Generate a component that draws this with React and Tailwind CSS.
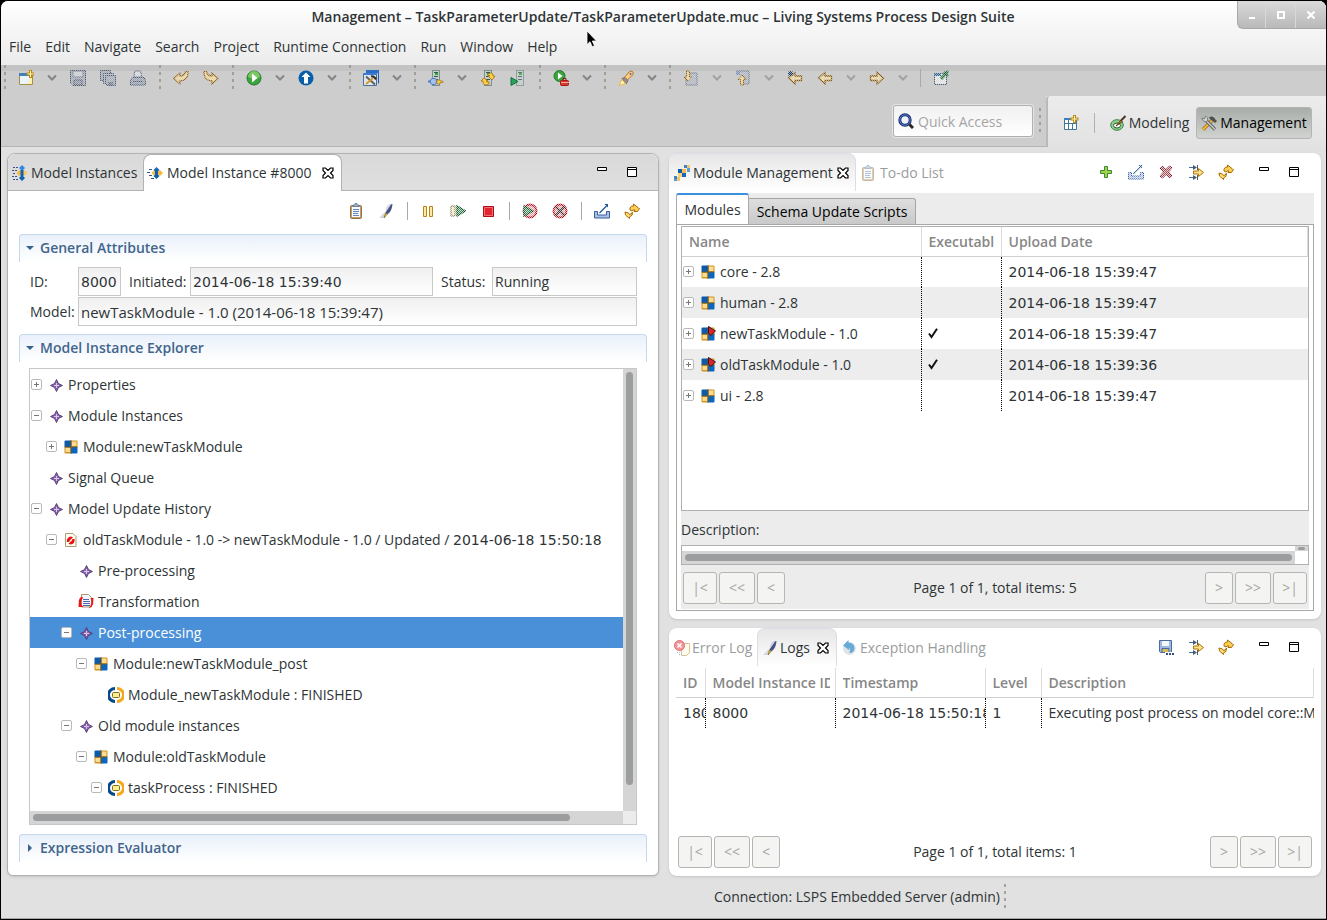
import React from "react";

/* ---------- icons (16x16 grid) ---------- */

const Icon = ({ dim = false, className = "", children }) => (
  <svg width="16" height="16" viewBox="0 0 16 16" aria-hidden="true" className={`shrink-0 ${className}`}>
    {dim ? <g mask="url(#dither)">{children}</g> : children}
  </svg>
);

// Checkerboard mask shared by every disabled icon
const DitherMask = () => (
  <svg width="0" height="0" className="absolute" aria-hidden="true">
    <defs>
      <pattern id="checks" width="2" height="2" patternUnits="userSpaceOnUse">
        <path d="M0 0h1v1H0zM1 1h1v1H1z" fill="#fff" shapeRendering="crispEdges" />
      </pattern>
      <mask id="dither" maskUnits="userSpaceOnUse" x="0" y="0" width="16" height="16">
        <rect width="16" height="16" fill="#444" />
        <rect width="16" height="16" fill="url(#checks)" />
      </mask>
    </defs>
  </svg>
);

const NewIcon = () => (
  <Icon>
    <path d="M1.5 3.5h13v11h-13z" fill="#eaf4fc" stroke="#a88d45" />
    <path d="M1 3h10v3H1z" fill="#3f80b8" />
    <path d="M11.5 6v3q0 5-5 5h7.5V7z" fill="#fff0a8" />
    <path d="M12.5 0v8M8.5 4h8" stroke="#b98b1b" strokeWidth="3" />
    <path d="M12.5 1v6M9.5 4h6" stroke="#fff4b0" strokeWidth="1" />
  </Icon>
);
const SaveIcon = () => (
  <Icon dim>
    <path d="M.5 .5h15v15h-13l-2-2z" fill="#a4adba" stroke="#4d5a70" />
    <path d="M3 1h10v6H3z" fill="#d4d8de" stroke="#6b7486" />
    <path d="M4 10h8v5H4z" fill="#8d96a6" stroke="#4d5a70" />
  </Icon>
);
const SaveAllIcon = () => (
  <Icon dim>
    <path d="M.5 .5h10v10h-10z" fill="#a4adba" stroke="#4d5a70" />
    <path d="M3.5 3.5h10v10h-10z" fill="#b5bcc7" stroke="#4d5a70" />
    <path d="M5.5 5.5h10v10h-8l-2-2z" fill="#a4adba" stroke="#4d5a70" />
    <path d="M8 12h5v3H8z" fill="#6b7486" />
  </Icon>
);
const PrintIcon = () => (
  <Icon dim>
    <path d="M4.5 1h6l1.500 6H4z" fill="#dfe3ea" stroke="#5c6880" />
    <path d="M2 7.5h12l1.500 3v4.500H.5v-4.500z" fill="#98a3b5" stroke="#4d5a70" />
    <path d="M3 11.5h10" stroke="#4d5a70" />
  </Icon>
);
const UndoIcon = () => (
  <Icon dim>
    <path d="M.8 8.5L7 3v3q4.500 0 5.500-4.500h2.500Q15.500 10.500 7 10.800V14z" fill="#fbe0a0" stroke="#94600a" strokeWidth="1.200" />
  </Icon>
);
const RedoIcon = () => (
  <Icon dim>
    <path d="M15.200 8.500L9 3v3Q4.500 6 3.500 1.500H1Q.5 10.500 9 10.800V14z" fill="#fbe0a0" stroke="#94600a" strokeWidth="1.200" />
  </Icon>
);
const RunIcon = () => (
  <Icon>
    <circle cx="8" cy="8" r="7" fill="#3da33c" stroke="#227a2c" />
    <path d="M2 7a6 6 0 0 1 12 0q-6 3-12 0z" fill="#7cc766" />
    <path d="M6 3.500l5.500 4.500L6 12.500z" fill="#fff" />
  </Icon>
);
const UploadIcon = () => (
  <Icon>
    <circle cx="8" cy="8" r="7.500" fill="#065fa8" />
    <path d="M8 2.500l4.500 4.500H10v6.500H6V7H3.500z" fill="#fff" />
  </Icon>
);
const ToolsWindowIcon = () => (
  <Icon>
    <path d="M3.500 .5h12v13" fill="none" stroke="#1f5fae" />
    <path d="M3 0h13v3H3z" fill="#2c6cc4" />
    <path d="M.5 3.500h13v12H.5z" fill="#dfe6ee" stroke="#4a6f9d" />
    <path d="M1 3h13v2H1z" fill="#3b7cd0" />
    <path d="M3 6.500l9 8" stroke="#5b6164" strokeWidth="2" />
    <path d="M3 14l7-6" stroke="#d69a26" strokeWidth="2" />
    <path d="M8 6.500q3-1 5 3" fill="none" stroke="#333" strokeWidth="2" />
  </Icon>
);
const Server = ({ x = 6 }) => (
  <g>
    <rect x={x + 0.5} y=".5" width="7" height="15" fill="#c3d0ce" stroke="#7b918d" />
    <path d={`M${x + 2} 2.500h4M${x + 2} 6.500h4M${x + 2} 9.500h4`} stroke="#3c5554" />
    <path d={`M${x + 3} 3h3v2h-3z`} fill="#24ae25" />
  </g>
);
const ServerPlugIcon = () => (
  <Icon>
    <Server x={4} />
    <path d="M4 8.500h3q1.500 0 1.500 3T7 14.500H4q-2-1-2-3t2-3z" fill="#a3c1ea" stroke="#4e7fc0" />
    <path d="M0 11.500h3" stroke="#4e7fc0" strokeWidth="2" />
    <path d="M9 10h3v1h3v1.500h-3V14H9z" fill="#f6cf58" stroke="#a97613" strokeWidth=".7" />
  </Icon>
);
const ServerSyncIcon = () => (
  <Icon>
    <Server x={4} />
    <path d="M8 4q5-3 5 2h2l-3 4-4-4h2q0-1-2 0z" fill="#fbd14b" stroke="#a56c05" strokeWidth=".8" />
    <path d="M9 14q-6 3-6-3H1l3-3 4 3H6q0 1 3 1z" fill="#fbd14b" stroke="#a56c05" strokeWidth=".8" />
  </Icon>
);
const ServerPlayIcon = () => (
  <Icon>
    <g opacity=".75"><Server x={6} /></g>
    <path d="M1 7.500l7 4-7 4z" fill="#2fa15b" stroke="#0f713a" />
  </Icon>
);
const RunToolsIcon = () => (
  <Icon>
    <circle cx="6.500" cy="6" r="5.500" fill="#3da33c" stroke="#227a2c" />
    <path d="M5 2.500l4.500 3.500L5 9.500z" fill="#fff" />
    <path d="M10 10V8.500h3V10" fill="none" stroke="#8e1515" />
    <rect x="7.500" y="10.500" width="8" height="5" rx="1" fill="#d9382d" stroke="#a21d18" />
    <path d="M8 12.500h8" stroke="#f2a79d" />
  </Icon>
);
const TorchIcon = () => (
  <Icon>
    <path d="M6 8l5-6q2-2 4 0 1 2-1 3.500L8.500 11z" fill="#ffce7d" stroke="#b9722b" />
    <path d="M4 8.500l3-1 3 3-2 3.500z" fill="#9b8d8d" stroke="#7b6c6c" />
    <path d="M1 15.500l3-6 3.500 4z" fill="#fff9c4" stroke="#eab640" />
    <circle cx="12.500" cy="4" r="1" fill="#3d6eb0" />
  </Icon>
);
const NextAnnotationIcon = () => (
  <Icon dim>
    <path d="M5 3h9v12H3V9" fill="#b4bbc6" stroke="#6e7a90" />
    <path d="M3.500 1h3v6h2.500L5 11 1 7h2.500z" fill="#f8dfa0" stroke="#94600a" />
  </Icon>
);
const PrevAnnotationIcon = () => (
  <Icon dim>
    <path d="M2 1h12v13H8" fill="#b4bbc6" stroke="#6e7a90" />
    <path d="M5.500 15h3V9.500H11L7 5 3 9.500h2.500z" fill="#f8dfa0" stroke="#94600a" />
    <path d="M1 1h4v4H1z" fill="#7d93b6" />
  </Icon>
);
const BackIcon = ({ star = false }) => (
  <Icon dim>
    <path d="M1.500 8L8 2.500V6h6.500v4.500H8V14z" fill="#fbe3a8" stroke="#875606" strokeWidth="1.300" />
    {star && <path d="M3.500 1v5M1 3.500h5M1.500 1.500l4 4M5.500 1.500l-4 4" stroke="#143c6a" />}
  </Icon>
);
const ForwardIcon = () => (
  <Icon dim>
    <path d="M14.500 8L8 2.500V6H1.500v4.500H8V14z" fill="#fbe3a8" stroke="#875606" strokeWidth="1.300" />
  </Icon>
);
const PinEditorIcon = () => (
  <Icon dim>
    <path d="M1.500 3.500h12v11h-12z" fill="#f2f4f6" stroke="#50647c" />
    <path d="M1 3h7v3H1z" fill="#376a9a" />
    <path d="M15 1l-7 8" stroke="#1d7b38" strokeWidth="3" />
    <path d="M11 2l4 4" stroke="#135e28" strokeWidth="2" />
  </Icon>
);
const SearchIcon = () => (
  <Icon>
    <circle cx="7" cy="7" r="5.200" fill="#eef2fa" stroke="#1b3175" strokeWidth="3" />
    <circle cx="7" cy="7" r="5.200" fill="none" stroke="#5b78c8" strokeWidth="1" />
    <path d="M11.500 11.500l3.500 3.500" stroke="#2d2722" strokeWidth="3" />
  </Icon>
);
const PerspectiveIcon = () => (
  <Icon>
    <path d="M1.500 3.500h12v11h-12z" fill="#fdfefe" stroke="#3f7898" />
    <path d="M1 3h10v2H1z" fill="#3a80bd" />
    <path d="M5.500 5v9M2 8.500h11M9.500 9v5" stroke="#3f7898" />
    <path d="M11.500 0v8M7.500 4h8" stroke="#b98b1b" strokeWidth="3" />
    <path d="M11.500 1v6M8.500 4h6" stroke="#fff4b0" />
  </Icon>
);
const ModelingIcon = () => (
  <Icon>
    <ellipse cx="7" cy="10" rx="6.300" ry="5.300" fill="#8fd08a" stroke="#3f7f48" />
    <ellipse cx="7" cy="10.500" rx="3.500" ry="2.500" fill="#fff" stroke="#1f5928" />
    <path d="M6 11l5-6 1.500 1.500z" fill="#c4873a" stroke="#5c3b12" />
    <path d="M11 5.500L15.500 1" stroke="#47382a" strokeWidth="2" />
  </Icon>
);
const ManagementIcon = () => (
  <Icon>
    <path d="M2 14.500l9-9" stroke="#a8690d" strokeWidth="3.400" />
    <path d="M2 14.500l9-9" stroke="#f2bb3d" strokeWidth="1.800" />
    <path d="M3.500 4l10.500 10.500" stroke="#5c6362" strokeWidth="3.200" />
    <path d="M3.500 4l10.500 10.500" stroke="#c9cecd" strokeWidth="1.400" />
    <path d="M.8 3l2.700 1 1-3q3 1 2 5-4 2-5.700-3z" fill="#d4d8d7" stroke="#6b7170" strokeWidth=".8" />
    <path d="M8 2.500q4-2.500 6.500 2L16 6l-2 2-5-4z" fill="#4b5150" />
  </Icon>
);
const Diamond = ({ x, y, r, fill }) => (
  <path d={`M${x} ${y - r}l${r} ${r}-${r} ${r}-${r}-${r}z`} fill={fill} />
);
const ModelInstancesIcon = () => (
  <Icon>
    <path d="M1 2.500h5M0 5.500h5M1 8.500h3M0 11.500h5M1 14.500h5" stroke="#33548a" strokeDasharray="2 1" />
    <Diamond x={10} y={3} r={3} fill="#2e8ae0" />
    <Diamond x={10} y={13} r={3} fill="#0d5fb0" />
    <Diamond x={7.5} y={8} r={3} fill="#f7b93e" />
    <Diamond x={12.5} y={8} r={3} fill="#f9c95e" />
    <path d="M8.500 5h3v6h-3z" fill="#0d62b8" />
  </Icon>
);
const ModelInstanceIcon = () => (
  <Icon>
    <path d="M2 4.500h4M0 7.500h4M2 10.500h4M4 13.500h3" stroke="#33548a" strokeDasharray="3 1" />
    <Diamond x={9.5} y={5} r={3} fill="#1668b8" />
    <Diamond x={9.5} y={11} r={3} fill="#0d5fb0" />
    <Diamond x={7} y={8} r={2.5} fill="#f7b93e" />
    <Diamond x={13} y={8} r={3} fill="#f7b93e" />
    <path d="M8 5h3v6H8z" fill="#0d62b8" />
  </Icon>
);
const CloseIcon = () => (
  <svg width="12" height="12" viewBox="0 0 12 12" aria-hidden="true">
    <path d="M1 1h2.500L6 3.500 8.500 1H11v2.500L8.500 6 11 8.500V11H8.500L6 8.500 3.500 11H1V8.500L3.500 6 1 3.500z" fill="#fff" stroke="#000" strokeWidth="1.200" />
  </svg>
);
const ClipboardIcon = ({ faded = false }) => (
  <Icon className={faded ? "opacity-50" : ""}>
    <rect x="2.500" y="2.500" width="11" height="13" rx="1" fill="#c99c61" stroke="#8d7350" />
    <path d="M4 4h8v10H4z" fill="#f6f9fe" />
    <path d="M5 6.500h6M5 8.500h6M5 10.500h5M5 12.500h6" stroke="#6585b8" />
    <path d="M5 3.500V2h2V.5h2V2h2v1.500z" fill="#a4bad8" stroke="#5c7394" strokeWidth=".8" />
  </Icon>
);
const PenIcon = () => (
  <Icon>
    <path d="M1 15q5-6 9-7l-3 7z" fill="#d6d7dc" />
    <path d="M14.500 1Q10 1 8.500 6.500l-1 4 2.500.5Q14 8 14.500 1z" fill="#47507e" />
    <path d="M13.500 1Q9 1 8 6.500L7.500 9.500z" fill="#cfd3e8" />
    <path d="M7.500 10l2 1L6 15z" fill="#e4c13b" stroke="#5c4c17" strokeWidth=".5" />
  </Icon>
);
const PauseIcon = () => (
  <Icon>
    <path d="M3.500 3.500h3v10h-3zM9.500 3.500h3v10h-3z" fill="#fdeaa0" stroke="#b8841c" />
  </Icon>
);
const ResumeIcon = () => (
  <Icon dim>
    <path d="M1 3h4v10H1z" fill="#f1e8b9" stroke="#6c6433" />
    <path d="M7 3l8.500 5L7 13z" fill="#3f8c5a" stroke="#0d5126" strokeWidth="1.500" />
  </Icon>
);
const StopIcon = () => (
  <Icon>
    <path d="M3.500 3.500h10v10h-10z" fill="#e32431" stroke="#a80d18" />
    <path d="M4.500 4.500h8v8h-8z" fill="none" stroke="#f07078" />
  </Icon>
);
const BreakpointRunIcon = () => (
  <Icon dim>
    <circle cx="8" cy="8" r="6.500" fill="#f0a0a4" stroke="#b40e1c" strokeWidth="2" />
    <path d="M2 3l9 5-9 5z" fill="#3f8c5a" stroke="#0d5126" strokeWidth="1.500" />
  </Icon>
);
const BreakpointOffIcon = () => (
  <Icon dim>
    <circle cx="8" cy="8" r="6.500" fill="#f0a0a4" stroke="#b40e1c" strokeWidth="2" />
    <path d="M3.500 3.500l9 9M12.500 3.500l-9 9" stroke="#2c2c2c" strokeWidth="2.200" />
  </Icon>
);
const ExportIcon = ({ dim = false }) => (
  <Icon dim={dim}>
    <path d="M.5 8.500h3v3.500h9V8.500h3v6.500H.5z" fill="#a9c1ea" stroke="#3d5f9c" />
    <path d="M5.500 10l7-7" stroke="#1c568f" strokeWidth="1.200" />
    <path d="M10.500 1H14v3.500z" fill="#1c568f" />
  </Icon>
);
const RefreshIcon = () => (
  <Icon>
    <path d="M6 7q-.5-4 3.500-4V1l4.500 3.500q.5 1 1.500 1l-2 3L10 8.500 11 7H9L8 8z" fill="#fbcf55" stroke="#a86a05" />
    <path d="M1 9l3.500 1 1 1.500q2 0 3-2.500.5 4-3 5v1.500L1.500 12z" fill="#fbdf6f" stroke="#a86a05" />
  </Icon>
);
const PlusIcon = () => (
  <Icon>
    <path d="M6.500 2.500h3v4h4v3h-4v4h-3v-4h-4v-3h4z" fill="#a6d343" stroke="#38883e" />
  </Icon>
);
const DeleteIcon = () => (
  <Icon dim>
    <path d="M2 4l2.500-2L8 5.500 11.500 2 14 4l-3.500 4 3.500 4-2.500 2L8 10.500 4.500 14 2 12l3.500-4z" fill="#a85058" stroke="#6d0d1c" />
  </Icon>
);
const FilterIcon = () => (
  <Icon>
    <path d="M1 3.500h6M1 13.500h6" stroke="#3c6e9c" />
    <path d="M5 1l4 2.500L5 6zM5 11l4 2.500L5 16z" fill="#4a5c70" />
    <path d="M9.500 1v5M9.500 11v5" stroke="#4a5c70" />
    <path d="M5.500 7h5V4.500l5 4-5 4V10h-5z" fill="#fbe08a" stroke="#b0740c" />
  </Icon>
);
const SaveAsIcon = () => (
  <Icon>
    <path d="M1.500 1.500h12v12h-11l-1-1z" fill="#9db9de" stroke="#4a6b9d" />
    <path d="M4 2h7v5H4z" fill="#f4f8fc" />
    <path d="M4 9.500h7v4H4z" fill="#d9b95d" stroke="#4a6b9d" />
    <path d="M7 13h9v3H7z" fill="#fff" />
    <path d="M8 14h2v2H8zM11 14h2v2h-2zM14 14h2v2h-2z" fill="#2e4f86" />
  </Icon>
);
const ModuleManagementIcon = () => (
  <Icon>
    <path d="M4 4h4v4H4z" fill="#0d5fb0" />
    <path d="M8 4h4v4H8z" fill="#f7bc4a" />
    <path d="M4 8h4v4H4z" fill="#f9cf78" />
    <path d="M8 8h4v4H8z" fill="#1469bd" />
    <path d="M10 0h3v3h-3zM0 11h3v3H0z" fill="#3984cc" />
    <path d="M13 0h3v3h-3zM3 12h3v4H3z" fill="#f5c566" />
    <path d="M13 3h3v4h-3zM0 14h3v2H0z" fill="#5d9bd4" />
  </Icon>
);
const ModuleIcon = ({ executable = false }) => (
  <Icon>
    <path d="M1.500 2.500q0-1 1-1H8v6.500H1.500z" fill="#0d5ba8" />
    <path d="M8 1.500h5.500q1 0 1 1V8H8z" fill="#d29224" />
    <path d="M9 2.500h4.500V7H9z" fill="#fcdc92" />
    <path d="M1.500 8H8v6.500H2.500q-1 0-1-1z" fill="#d29224" />
    <path d="M2.500 9H7v4H2.500z" fill="#fcdc92" />
    <path d="M8 8h6.500v5.500q0 1-1 1H8z" fill="#0d66bd" />
    <path d="M8 1v14M1.500 8h13" stroke="#6a5a34" strokeWidth=".8" />
    {executable && <path d="M8.500 .5v6.500l2 2.500 5-4.500z" fill="#d8262c" stroke="#43110f" />}
  </Icon>
);
const StarIcon = () => (
  <Icon>
    <path d="M8.500 2.500l2 4 4 2-4 2-2 4-2-4-4-2 4-2z" fill="#8763a8" stroke="#4b2f70" strokeWidth=".8" />
    <path d="M8.500 6v5M6 8.500h5" stroke="#dcc8ea" />
  </Icon>
);
const UpdateIcon = () => (
  <Icon>
    <path d="M2.500 1.500h7.500l3 3v10h-10.500z" fill="#fffdf2" stroke="#a99c7a" />
    <path d="M3.800 10q-.3-5 4.200-5.500l2 .8-2.300 2.200Q6.500 8 6.200 10z" fill="#ef1111" />
    <path d="M11.700 7q.3 5-4.200 5.500l-2-.8 2.300-2.200Q9 9 9.300 7z" fill="#ef1111" />
  </Icon>
);
const TransformationIcon = () => (
  <Icon>
    <path d="M3.500 .5h7l3 3v9.500h-10z" fill="#f6f6fa" stroke="#a89a6d" />
    <path d="M5 5.500h6M5 7.500h7M5 9.500h7M5 11.500h7" stroke="#4b6bb0" />
    <path d="M4 2.500Q.5 4 .8 8.500L.5 13h5L3.500 11Q2 7 5 4z" fill="#f01212" />
    <path d="M12 13.500Q15.500 12 15.200 7.500l.3-3.500H12.500q2 4 0 7.500l-2 3z" fill="#f01212" />
  </Icon>
);
const ProcessIcon = () => (
  <Icon>
    <path d="M7 0A8 8 0 0 0 7 16V13A5 5 0 0 1 7 3z" fill="#064a8b" />
    <path d="M9 0A8 8 0 0 1 9 16V13A5 5 0 0 0 9 3z" fill="#f5a81c" />
    <rect x="4.500" y="5.500" width="7" height="5" rx="1" fill="#fdf08c" stroke="#7f6c1c" />
  </Icon>
);
const ErrorLogIcon = () => (
  <Icon className="opacity-70">
    <path d="M7.500 3.500h8v9l-3 3h-5z" fill="#fffbe9" stroke="#c5ac65" />
    <circle cx="5.500" cy="5.500" r="5" fill="#ee6a70" stroke="#cf3037" />
    <path d="M3.500 3.500l4 4M7.500 3.500l-4 4" stroke="#fff" strokeWidth="1.500" />
    <path d="M3 12.500h4M5 14.500h3" stroke="#7ea2d8" strokeDasharray="1 1" />
  </Icon>
);
const ExceptionIcon = () => (
  <Icon className="opacity-70">
    <circle cx="8.500" cy="8.500" r="6.500" fill="#d3dadf" />
    <path d="M2 5.500L7.500 0v2.500q6 .5 6 5.500T8 13q2-2.500 0-5.500v2.500z" fill="#2787c6" />
  </Icon>
);
const MinimizeIcon = () => (
  <Icon><path d="M3.500 3.500h9v3h-9z" fill="#fff" stroke="#000" /></Icon>
);
const MaximizeIcon = () => (
  <Icon><path d="M3.500 3.500h9v9h-9zM3.500 5.500h9" fill="#fff" stroke="#000" /></Icon>
);
const CheckIcon = () => (
  <svg width="10" height="12" viewBox="0 0 10 12" role="img" aria-label="Executable">
    <path d="M1 5.500L3.500 9 9 .8" fill="none" stroke="#111" strokeWidth="2" />
  </svg>
);

/* ---------- small building blocks ---------- */

const ToolButton = ({ label, children }) => (
  <button type="button" aria-label={label} className="flex h-[26px] w-[30px] shrink-0 items-center justify-center">{children}</button>
);

const DropButton = ({ label, faded = false }) => (
  <button type="button" aria-label={label} className={`flex h-[26px] w-[22px] shrink-0 items-center justify-center ${faded ? "opacity-60" : ""}`}>
    <svg width="10" height="8" viewBox="0 0 10 8" aria-hidden="true">
      <path d="M1 1.500l4 4 4-4" fill="none" stroke="#858585" strokeWidth="2" />
    </svg>
  </button>
);

const Handle = ({ className = "w-[13px] justify-center" }) => (
  <span className={`flex h-[26px] shrink-0 ${className}`}>
    <svg width="2" height="26" viewBox="0 0 2 26" aria-hidden="true">
      <path d="M1 0v26" stroke="#968f7f" strokeWidth="1.500" strokeDasharray="3 4" />
    </svg>
  </span>
);

const Separator = () => (
  <span className="flex w-3 shrink-0 justify-center"><span className="h-[18px] w-px bg-[#a9a9a9]" /></span>
);

const PanelButtons = () => (
  <>
    <ToolButton label="Minimize"><MinimizeIcon /></ToolButton>
    <ToolButton label="Maximize"><MaximizeIcon /></ToolButton>
  </>
);

const SectionHeader = ({ title, open }) => (
  <button type="button" aria-expanded={open} className="flex h-7 w-full shrink-0 items-center gap-1 rounded-t border border-b-0 border-[#c5d9ee] bg-linear-to-b from-[#eaf1fb] to-white pb-[2px] pl-[6px] text-left font-semibold text-[#41658c]">
    <svg width="10" height="8" viewBox="0 0 10 8" aria-hidden="true">
      <path d={open ? "M0 2h8L4 6z" : "M2 0l4 4-4 4z"} fill="#38618c" />
    </svg>
    {title}
  </button>
);

const Expander = ({ open }) => (
  <svg width="11" height="11" viewBox="0 0 11 11" aria-hidden="true" className="shrink-0">
    <rect x=".5" y=".5" width="10" height="10" rx="1.500" fill="#fff" stroke="#b9b9b9" />
    <path d={open ? "M3 5.500h5" : "M3 5.500h5M5.500 3v5"} stroke="#777" />
  </svg>
);

const Stamp = ({ children }) => <span className="font-['DejaVu_Sans',sans-serif]">{children}</span>;

const PageButton = ({ className, label, children }) => (
  <button type="button" disabled aria-label={label} className={`h-8 rounded-[3px] border border-[#b4b6b2] bg-[#f4f4f2] text-[#a5a7a5] ${className}`}>{children}</button>
);

const Pager = ({ total }) => (
  <div className="flex items-center justify-between">
    <div className="flex gap-[2px]">
      <PageButton className="w-[34px]" label="First page">|&lt;</PageButton>
      <PageButton className="w-9" label="Previous pages">&lt;&lt;</PageButton>
      <PageButton className="w-7" label="Previous page">&lt;</PageButton>
    </div>
    <p>Page 1 of 1, total items: {total}</p>
    <div className="flex gap-[2px]">
      <PageButton className="w-7" label="Next page">&gt;</PageButton>
      <PageButton className="w-9" label="Next pages">&gt;&gt;</PageButton>
      <PageButton className="w-[34px]" label="Last page">&gt;|</PageButton>
    </div>
  </div>
);

const Field = ({ id, label, value, labelClass, className }) => (
  <>
    <label htmlFor={id} className={`shrink-0 ${labelClass}`}>{label}</label>
    <input id={id} readOnly defaultValue={value} className={`h-[29px] min-w-0 border border-[#c8c8c8] bg-linear-to-b from-[#f0f0f0] to-white px-[2px] outline-none ${className}`} />
  </>
);

/* ---------- data ---------- */

const menus = ["File", "Edit", "Navigate", "Search", "Project", "Runtime Connection", "Run", "Window", "Help"];

const indents = ["pl-px", "pl-4", "pl-[31px]", "pl-[46px]", "pl-[61px]"];

const tree = [
  { level: 0, open: false, icon: <StarIcon />, text: "Properties" },
  { level: 0, open: true, icon: <StarIcon />, text: "Module Instances" },
  { level: 1, open: false, icon: <ModuleIcon />, text: "Module:newTaskModule" },
  { level: 0, icon: <StarIcon />, text: "Signal Queue" },
  { level: 0, open: true, icon: <StarIcon />, text: "Model Update History" },
  { level: 1, open: true, icon: <UpdateIcon />, text: "oldTaskModule - 1.0 -> newTaskModule - 1.0 / Updated / ", stamp: "2014-06-18 15:50:18" },
  { level: 2, icon: <StarIcon />, text: "Pre-processing" },
  { level: 2, icon: <TransformationIcon />, text: "Transformation" },
  { level: 2, open: true, icon: <StarIcon />, text: "Post-processing", selected: true },
  { level: 3, open: true, icon: <ModuleIcon />, text: "Module:newTaskModule_post" },
  { level: 4, icon: <ProcessIcon />, text: "Module_newTaskModule : FINISHED" },
  { level: 2, open: true, icon: <StarIcon />, text: "Old module instances" },
  { level: 3, open: true, icon: <ModuleIcon />, text: "Module:oldTaskModule" },
  { level: 4, open: true, icon: <ProcessIcon />, text: "taskProcess : FINISHED" },
];

const modules = [
  { name: "core - 2.8", date: "2014-06-18 15:39:47" },
  { name: "human - 2.8", date: "2014-06-18 15:39:47" },
  { name: "newTaskModule - 1.0", date: "2014-06-18 15:39:47", executable: true },
  { name: "oldTaskModule - 1.0", date: "2014-06-18 15:39:36", executable: true },
  { name: "ui - 2.8", date: "2014-06-18 15:39:47" },
];

/* ---------- window chrome ---------- */

const TitleBar = () => (
  <header className="flex h-16 shrink-0 flex-col bg-linear-to-b from-white to-[#ebebeb]">
    <div className="flex h-7 items-start">
      <span className="w-[88px]" />
      <h1 className="flex-1 pt-[6px] text-center leading-5 font-semibold">Management – TaskParameterUpdate/TaskParameterUpdate.muc – Living Systems Process Design Suite</h1>
      <div className="flex h-7 divide-x divide-[#d8d8d8] overflow-hidden rounded-bl-md border-b border-l border-[#a9a9a9] bg-linear-to-b from-[#dadada] to-[#b9b9b9]">
        <button type="button" aria-label="Minimize window" className="flex w-7 items-center justify-center">
          <svg width="10" height="10" viewBox="0 0 10 10"><path d="M2 7h6v2H2z" fill="#fff" /></svg>
        </button>
        <button type="button" aria-label="Maximize window" className="flex w-[30px] items-center justify-center">
          <svg width="10" height="10" viewBox="0 0 10 10"><path d="M2 2h6v6H2z" fill="none" stroke="#fff" strokeWidth="2" /></svg>
        </button>
        <button type="button" aria-label="Close window" className="flex w-[30px] items-center justify-center">
          <svg width="10" height="10" viewBox="0 0 10 10"><path d="M1.500 1.500l7 7M8.500 1.500l-7 7" stroke="#fff" strokeWidth="2.200" /></svg>
        </button>
      </div>
    </div>
    <nav className="flex gap-[14px] pt-2 pl-2 leading-5">
      {menus.map((menu) => (
        <button key={menu} type="button">{menu}</button>
      ))}
    </nav>
  </header>
);

const MainToolbar = () => (
  <div className="flex h-[31px] shrink-0 items-start overflow-hidden bg-linear-to-b from-[#c3c3c3] from-20% to-[#cdcdcd] to-20%">
    <div className="flex items-center">
      <Handle className="w-[10px] justify-start pl-[3px]" />
      <ToolButton label="New"><NewIcon /></ToolButton>
      <DropButton label="New options" />
      <ToolButton label="Save"><SaveIcon /></ToolButton>
      <ToolButton label="Save all"><SaveAllIcon /></ToolButton>
      <ToolButton label="Print"><PrintIcon /></ToolButton>
      <Handle />
      <ToolButton label="Undo"><UndoIcon /></ToolButton>
      <ToolButton label="Redo"><RedoIcon /></ToolButton>
      <Handle />
      <ToolButton label="Run"><RunIcon /></ToolButton>
      <DropButton label="Run options" />
      <ToolButton label="Upload"><UploadIcon /></ToolButton>
      <DropButton label="Upload options" />
      <Handle />
      <ToolButton label="Management tools"><ToolsWindowIcon /></ToolButton>
      <DropButton label="Tool options" />
      <Handle />
      <ToolButton label="Connect server"><ServerPlugIcon /></ToolButton>
      <DropButton label="Server options" />
      <ToolButton label="Synchronize server"><ServerSyncIcon /></ToolButton>
      <ToolButton label="Start server"><ServerPlayIcon /></ToolButton>
      <Handle />
      <ToolButton label="External tools"><RunToolsIcon /></ToolButton>
      <DropButton label="External tool options" />
      <Handle />
      <ToolButton label="Search"><TorchIcon /></ToolButton>
      <DropButton label="Search options" />
      <Handle />
      <ToolButton label="Next annotation"><NextAnnotationIcon /></ToolButton>
      <DropButton label="Next annotation options" faded />
      <ToolButton label="Previous annotation"><PrevAnnotationIcon /></ToolButton>
      <DropButton label="Previous annotation options" faded />
      <ToolButton label="Last edit location"><BackIcon star /></ToolButton>
      <ToolButton label="Back"><BackIcon /></ToolButton>
      <DropButton label="Back options" faded />
      <ToolButton label="Forward"><ForwardIcon /></ToolButton>
      <DropButton label="Forward options" faded />
      <Separator />
      <ToolButton label="Pin editor"><PinEditorIcon /></ToolButton>
    </div>
  </div>
);

const PerspectiveBar = () => (
  <div className="flex h-[51px] shrink-0">
    <div className="flex flex-1 items-center justify-end border-b border-[#b4b4b4] bg-[#cdcdcd]">
      <label className="flex h-8 w-[140px] items-center gap-1 rounded-[3px] border border-[#b0b0b0] bg-linear-to-b from-[#f1f1f1] to-white pl-1 shadow-[0_0_0_1px_#e4e4e4]">
        <SearchIcon />
        <input aria-label="Quick Access" placeholder="Quick Access" className="w-full min-w-0 bg-transparent pt-px outline-none placeholder:text-[#a5a5a5]" />
      </label>
      <Handle />
    </div>
    <div className="flex items-center rounded-tl-sm border-l-2 border-[#b9b9b9] bg-linear-to-b from-[#ececec] to-[#e2e2e2] pt-[2px] pr-[14px] pl-2">
      <ToolButton label="Open perspective"><PerspectiveIcon /></ToolButton>
      <span className="mx-2 h-5 w-px bg-[#b0b0b0]" />
      <button type="button" className="flex h-8 w-[93px] items-center justify-center gap-[3px]"><ModelingIcon />Modeling</button>
      <button type="button" className="flex h-8 w-[116px] items-center justify-center gap-[3px] rounded-[3px] border border-[#b3b6b3] bg-linear-to-b from-[#a9adaa] to-[#d0d3d0] text-black"><ManagementIcon />Management</button>
    </div>
  </div>
);

/* ---------- panels ---------- */

const ModelInstancePanel = () => (
  <section className="flex min-w-0 flex-col rounded-t-lg rounded-b-md border border-[#b2b2b2] bg-white shadow-sm">
    <div className="flex h-[37px] shrink-0 rounded-t-lg bg-linear-to-b from-[#d9d9d9] to-[#e0e0e0]">
      <button type="button" className="flex w-[135px] items-center gap-[3px] border-b border-[#b2b2b2] pt-[2px] pl-1 whitespace-nowrap"><ModelInstancesIcon />Model Instances</button>
      <div className="flex w-[199px] items-center gap-1 rounded-t-lg border-x border-t border-[#b2b2b2] bg-white pl-[3px]">
        <ModelInstanceIcon />
        <button type="button" className="whitespace-nowrap">Model Instance #8000</button>
        <button type="button" aria-label="Close Model Instance #8000" className="ml-auto pr-[7px]"><CloseIcon /></button>
      </div>
      <div className="flex flex-1 items-center justify-end border-b border-[#b2b2b2] pr-[11px]"><PanelButtons /></div>
    </div>

    <div className="mb-[3px] flex h-10 shrink-0 items-center justify-end pr-[11px]">
      <ToolButton label="To-do list"><ClipboardIcon /></ToolButton>
      <ToolButton label="Logs"><PenIcon /></ToolButton>
      <Separator />
      <ToolButton label="Suspend"><PauseIcon /></ToolButton>
      <ToolButton label="Resume"><ResumeIcon /></ToolButton>
      <ToolButton label="Terminate"><StopIcon /></ToolButton>
      <Separator />
      <ToolButton label="Activate breakpoint"><BreakpointRunIcon /></ToolButton>
      <ToolButton label="Remove breakpoint"><BreakpointOffIcon /></ToolButton>
      <Separator />
      <ToolButton label="Export"><ExportIcon /></ToolButton>
      <ToolButton label="Refresh"><RefreshIcon /></ToolButton>
    </div>

    <div className="flex flex-1 flex-col px-[11px] pb-[13px]">
      <SectionHeader title="General Attributes" open />
      <div className="mt-[5px] mb-2 flex flex-col gap-px pr-[10px] pl-[11px]">
        <div className="flex items-center">
          <Field id="instance-id" label="ID:" value="8000" labelClass="w-12" className="w-[43px] font-['DejaVu_Sans',sans-serif]" />
          <Field id="initiated" label="Initiated:" value="2014-06-18 15:39:40" labelClass="ml-2 w-[61px]" className="flex-1 font-['DejaVu_Sans',sans-serif]" />
          <Field id="status" label="Status:" value="Running" labelClass="ml-2 w-[51px]" className="w-[145px]" />
        </div>
        <div className="flex items-center">
          <Field id="model" label="Model:" value="newTaskModule - 1.0 (2014-06-18 15:39:47)" labelClass="w-12" className="flex-1 text-[15px]" />
        </div>
      </div>

      <SectionHeader title="Model Instance Explorer" open />
      <div className="mx-[10px] mt-[6px] mb-[9px] grid flex-1 grid-cols-[1fr_13px] grid-rows-[1fr_13px] border border-[#c8c8c8]">
        <ul role="tree" aria-label="Model Instance Explorer" className="min-w-0 overflow-hidden pb-[7px]">
          {tree.map((node) => (
            <li
              key={node.text}
              role="treeitem"
              aria-expanded={node.open}
              aria-selected={Boolean(node.selected)}
              className={`flex h-[31px] items-center whitespace-nowrap ${indents[node.level]} ${node.selected ? "bg-[#4a90d9] text-white" : ""}`}
            >
              <span className="w-[17px] shrink-0">{node.open !== undefined && <Expander open={node.open} />}</span>
              {node.icon}
              <span className="pl-1">{node.text}{node.stamp && <Stamp>{node.stamp}</Stamp>}</span>
            </li>
          ))}
        </ul>
        <div className="flex flex-col items-center bg-[#d5d5d5] pt-[3px]"><span className="h-[94%] w-[7px] rounded-full bg-[#9c9d9e]" /></div>
        <div className="flex items-center bg-[#d5d5d5] pl-[3px]"><span className="h-[7px] w-[91%] rounded-full bg-[#9c9d9e]" /></div>
        <div className="bg-[#ececec]" />
      </div>

      <SectionHeader title="Expression Evaluator" open={false} />
    </div>
  </section>
);

const ModuleManagementPanel = () => (
  <section className="flex min-w-0 flex-1 flex-col rounded-lg bg-white px-[7px] pb-2 shadow-sm">
    <div className="-mx-[7px] flex h-10 shrink-0">
      <div className="flex h-[38px] w-[187px] items-center gap-[3px] rounded-t-lg border-t border-r border-[#dcdcea] bg-linear-to-b from-[#e6e6e6] to-white pl-[5px]">
        <ModuleManagementIcon />
        <button type="button" className="whitespace-nowrap">Module Management</button>
        <button type="button" aria-label="Close Module Management" className="ml-auto pr-[6px]"><CloseIcon /></button>
      </div>
      <button type="button" className="flex h-[38px] items-center gap-1 pt-[2px] pl-1 text-[#9a9d9d]"><ClipboardIcon faded />To-do List</button>
      <div className="flex h-[38px] flex-1 items-center justify-end pr-3">
        <ToolButton label="Upload module"><PlusIcon /></ToolButton>
        <ToolButton label="Export module"><ExportIcon dim /></ToolButton>
        <ToolButton label="Delete module"><DeleteIcon /></ToolButton>
        <ToolButton label="Filter"><FilterIcon /></ToolButton>
        <ToolButton label="Refresh modules"><RefreshIcon /></ToolButton>
        <span className="w-2" />
        <PanelButtons />
      </div>
    </div>

    <div role="tablist" className="flex h-[31px] shrink-0 items-end bg-[#ececec]">
      <button type="button" role="tab" aria-selected="true" className="h-[31px] w-[73px] rounded-t-[3px] border-x border-t-2 border-x-[#a9a9a9] border-t-[#3d8fe0] bg-white">Modules</button>
      <button type="button" role="tab" aria-selected="false" className="h-[26px] w-[167px] rounded-tr-[3px] border-t border-r border-[#a5a5a5] bg-linear-to-b from-[#dedede] to-[#c9c9c9] text-black">Schema Update Scripts</button>
    </div>

    <div className="flex flex-1 flex-col border border-[#a5a8a5] px-1 pt-px pb-px">
      <div className="flex-1 border border-[#b0b0b0]">
        <table className="w-full table-fixed border-collapse text-left">
          <colgroup><col className="w-[239px]" /><col className="w-20" /><col /></colgroup>
          <thead className="text-[#878787]">
            <tr className="h-[29px] border-b border-[#cfcfcf]">
              <th className="border-r border-[#dcdcdc] px-[7px] pt-[2px] font-semibold">Name</th>
              <th className="border-r border-[#dcdcdc] px-[7px] pt-[2px] font-semibold"><div className="overflow-hidden">Executable</div></th>
              <th className="border-r border-[#dcdcdc] px-[7px] pt-[2px] font-semibold">Upload Date</th>
            </tr>
          </thead>
          <tbody>
            {modules.map((item) => (
              <tr key={item.name} className="h-[31px] even:bg-[#ededed]">
                <td className="border-r border-dotted border-black pl-px">
                  <div className="flex items-center">
                    <Expander open={false} />
                    <span className="w-[6px]" />
                    <ModuleIcon executable={item.executable} />
                    <span className="pl-1">{item.name}</span>
                  </div>
                </td>
                <td className="border-r border-dotted border-black pl-[6px]">{item.executable && <CheckIcon />}</td>
                <td className="px-[7px]"><Stamp>{item.date}</Stamp></td>
              </tr>
            ))}
          </tbody>
        </table>
      </div>
      <div className="bg-[#ececec] pb-[5px]">
        <label htmlFor="module-description" className="block pt-[9px] pb-[5px] leading-5">Description:</label>
        <div className="grid grid-cols-[1fr_13px] border border-[#b0b0b0] bg-white">
          <div>
            <textarea id="module-description" readOnly className="block h-[5px] w-full resize-none outline-none" />
            <div className="flex h-[13px] items-center bg-[#d5d5d5] px-[3px]"><span className="h-[7px] w-full rounded-full bg-[#9c9d9e]" /></div>
          </div>
          <div className="flex h-[5px] items-center justify-center bg-[#d5d5d5]"><span className="h-[3px] w-[7px] rounded-full bg-[#9c9d9e]" /></div>
        </div>
        <div className="px-[2px] pt-[7px]"><Pager total={5} /></div>
      </div>
    </div>
  </section>
);

const LogsPanel = () => (
  <section className="flex min-h-[248px] min-w-0 flex-col rounded-lg bg-white px-[7px] pb-2 shadow-sm">
    <div className="-mx-[7px] flex h-10 shrink-0">
      <button type="button" className="flex h-[38px] w-[88px] items-center gap-[2px] pt-[2px] pl-[5px] whitespace-nowrap text-[#9a9d9d]"><ErrorLogIcon />Error Log</button>
      <div className="flex h-[38px] w-20 items-center gap-[2px] rounded-t-lg border border-b-0 border-[#dcdcea] bg-linear-to-b from-[#e6e6e6] to-white pl-1">
        <PenIcon />
        <button type="button">Logs</button>
        <button type="button" aria-label="Close Logs" className="ml-auto pr-[7px]"><CloseIcon /></button>
      </div>
      <button type="button" className="flex h-[38px] items-center gap-[3px] pt-[2px] pl-1 text-[#9a9d9d]"><ExceptionIcon />Exception Handling</button>
      <div className="flex h-[38px] flex-1 items-center justify-end pr-3">
        <ToolButton label="Save logs"><SaveAsIcon /></ToolButton>
        <ToolButton label="Filter logs"><FilterIcon /></ToolButton>
        <ToolButton label="Refresh logs"><RefreshIcon /></ToolButton>
        <span className="w-2" />
        <PanelButtons />
      </div>
    </div>
    <div className="flex-1">
      <table className="w-full table-fixed border-collapse text-left whitespace-nowrap">
        <colgroup><col className="w-[29px]" /><col className="w-[130px]" /><col className="w-[150px]" /><col className="w-14" /><col /></colgroup>
        <thead className="text-[#878787]">
          <tr className="h-[29px] border-b border-[#cfcfcf]">
            {["ID", "Model Instance ID", "Timestamp", "Level", "Description"].map((title) => (
              <th key={title} className="border-r border-[#dcdcdc] pt-[2px] pr-[5px] pl-[7px] font-semibold"><div className="overflow-hidden">{title}</div></th>
            ))}
          </tr>
        </thead>
        <tbody>
          <tr className="h-[31px]">
            {["1800", "8000", "2014-06-18 15:50:18", "1"].map((cell) => (
              <td key={cell} className="overflow-hidden border-r border-dotted border-black pl-[7px]"><Stamp>{cell}</Stamp></td>
            ))}
            <td className="overflow-hidden pl-[7px]">Executing post process on model core::Model</td>
          </tr>
        </tbody>
      </table>
    </div>
    <div className="px-[2px]"><Pager total={1} /></div>
  </section>
);

const Pointer = () => (
  <svg width="12" height="18" viewBox="0 0 12 18" aria-hidden="true" className="pointer-events-none absolute top-[29px] left-[585px]">
    <path d="M1 1v13.500l3-2.800 2.200 5 2.300-1-2.200-4.700h4.200z" fill="#000" stroke="#fff" strokeWidth=".8" />
  </svg>
);

export default function App() {
  return (
    <div className="bg-black">
      <div className="relative flex min-h-screen flex-col overflow-hidden rounded-t-lg border border-black bg-[#e1e1e1] font-['Open_Sans',sans-serif] text-[14px] leading-5 text-[#2e3436]">
        <DitherMask />
        <TitleBar />
        <MainToolbar />
        <PerspectiveBar />
        <main className="grid flex-1 grid-cols-2 gap-[10px] pt-[6px] pr-[5px] pl-[6px]">
          <ModelInstancePanel />
          <div className="flex min-w-0 flex-col gap-[9px]">
            <ModuleManagementPanel />
            <LogsPanel />
          </div>
        </main>
        <footer className="flex h-[43px] shrink-0 items-center justify-end gap-1 border-b border-[#a5a5a5] pr-[320px]">
          <span>Connection: LSPS Embedded Server (admin)</span>
          <Handle className="w-[2px]" />
        </footer>
        <Pointer />
      </div>
    </div>
  );
}
